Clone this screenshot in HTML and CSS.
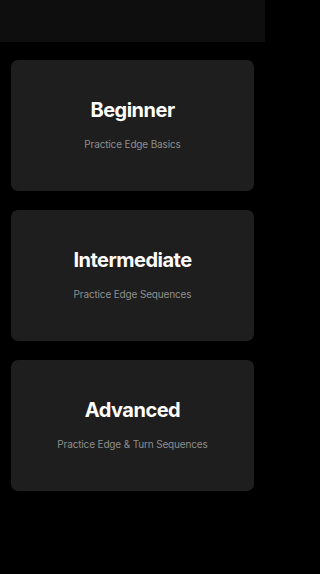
FILE: index.html
```html
<!DOCTYPE html>
<html>
<head>
<meta charset="utf-8">
<link rel="stylesheet" href="styles.css">
</head>
<body>
<div class="page">
  <div class="header"></div>
  <main class="list">
    <div class="card">
      <div class="title">Beginner</div>
      <div class="sub">Practice Edge Basics</div>
    </div>
    <div class="card">
      <div class="title">Intermediate</div>
      <div class="sub">Practice Edge Sequences</div>
    </div>
    <div class="card">
      <div class="title">Advanced</div>
      <div class="sub">Practice Edge &amp; Turn Sequences</div>
    </div>
  </main>
</div>
</body>
</html>
```
FILE: styles.css
```css
html, body {
  margin: 0;
  padding: 0;
  background: #000;
  height: 100%;
}
body {
  font-family: Inter, "Noto Sans", sans-serif;
  color: #fff;
}
.page {
  max-width: 265px;
}
.header {
  height: 42px;
  background: #0e0e0e;
}
.list {
  display: flex;
  flex-direction: column;
  gap: 19px;
  padding: 18px 11px 0 11px;
}
.card {
  height: 131px;
  background: #1e1e1e;
  border-radius: 7px;
  display: flex;
  flex-direction: column;
  align-items: center;
  justify-content: center;
  gap: 15px;
  padding-bottom: 2px;
  box-sizing: border-box;
}
.title {
  font-size: 20px;
  font-weight: 700;
  line-height: 24px;
  letter-spacing: -0.5px;
}
.sub {
  font-size: 10px;
  line-height: 14px;
  letter-spacing: -0.15px;
  color: #8e8e8e;
}
```
